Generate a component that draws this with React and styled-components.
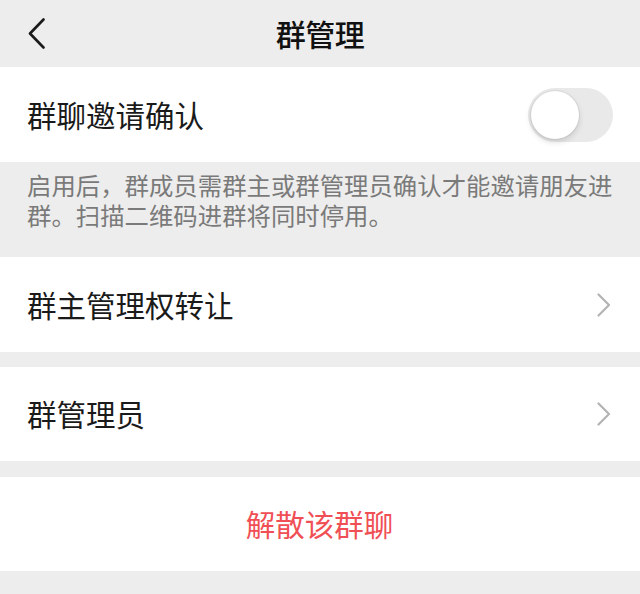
import React, { useState } from "react";
import styled, { createGlobalStyle } from "styled-components";

const GlobalStyle = createGlobalStyle`
  html, body {
    margin: 0;
    padding: 0;
    background: #ededed;
  }
  body {
    font-family: "Noto Sans CJK SC", "Noto Sans", sans-serif;
    -webkit-font-smoothing: antialiased;
  }
`;

const Page = styled.div`
  width: 640px;
  min-height: 594px;
  background: #ededed;
  color: #1a1a1a;
`;

const NavBar = styled.header`
  height: 67px;
  display: grid;
  grid-template-columns: 1fr auto 1fr;
  align-items: center;
  padding: 0 28px;
  box-sizing: border-box;
`;

const BackButton = styled.button`
  justify-self: start;
  display: flex;
  align-items: center;
  padding: 0;
  border: 0;
  background: none;
  cursor: pointer;
`;

const Title = styled.h1`
  margin: 0 0 1px;
  font-size: 30px;
  font-weight: 500;
  line-height: 1;
  color: #111;
  letter-spacing: -0.5px;
`;

const Cell = styled.div`
  height: ${(p) => p.h || 95}px;
  margin-top: ${(p) => p.gap || 0}px;
  background: #fff;
  display: flex;
  align-items: center;
  justify-content: ${(p) => (p.center ? "center" : "space-between")};
  padding: 0 28px 0 27px;
  box-sizing: border-box;
  cursor: pointer;
`;

const Label = styled.span`
  font-size: 29.5px;
  line-height: 1;
  color: ${(p) => (p.danger ? "#f04f55" : "#1a1a1a")};
`;

const Note = styled.p`
  margin: 0;
  height: 95px;
  box-sizing: border-box;
  padding: 8px 20px 0 27px;
  font-size: 24.4px;
  line-height: 30px;
  color: #7a7a7a;
`;

const Track = styled.button`
  width: 85px;
  height: 54px;
  border-radius: 27px;
  border: 0;
  padding: 3px;
  margin-right: -1px;
  background: ${(p) => (p.on ? "#07c160" : "#e9e9ea")};
  display: flex;
  justify-content: ${(p) => (p.on ? "flex-end" : "flex-start")};
  align-items: center;
  box-sizing: border-box;
  cursor: pointer;
`;

const Knob = styled.span`
  width: 48px;
  height: 48px;
  border-radius: 50%;
  background: #fff;
  box-shadow: 0 0 0 1px rgba(0, 0, 0, 0.06), 0 3px 6px rgba(0, 0, 0, 0.14);
`;

const Back = () => (
  <svg width="17" height="31" viewBox="0 0 17 31" fill="none">
    <polyline
      points="15.5,1.5 2,15.5 15.5,29.5"
      stroke="#1a1a1a"
      strokeWidth="2.6"
      strokeLinecap="round"
      strokeLinejoin="round"
    />
  </svg>
);

const Arrow = () => (
  <svg width="16" height="24" viewBox="0 0 16 24" fill="none">
    <polyline
      points="2.5,1.5 13,12 2.5,22.5"
      stroke="#b3b3b3"
      strokeWidth="2.2"
      strokeLinecap="round"
      strokeLinejoin="round"
    />
  </svg>
);

export default function App() {
  const [confirm, setConfirm] = useState(false);

  return (
    <Page>
      <GlobalStyle />
      <NavBar>
        <BackButton aria-label="返回">
          <Back />
        </BackButton>
        <Title>群管理</Title>
        <span />
      </NavBar>

      <Cell>
        <Label>群聊邀请确认</Label>
        <Track on={confirm ? 1 : 0} onClick={() => setConfirm(!confirm)}>
          <Knob />
        </Track>
      </Cell>
      <Note>启用后，群成员需群主或群管理员确认才能邀请朋友进群。扫描二维码进群将同时停用。</Note>

      <Cell>
        <Label>群主管理权转让</Label>
        <Arrow />
      </Cell>
      <Cell gap={15} h={94}>
        <Label>群管理员</Label>
        <Arrow />
      </Cell>
      <Cell gap={16} h={94} center>
        <Label danger>解散该群聊</Label>
      </Cell>
    </Page>
  );
}
